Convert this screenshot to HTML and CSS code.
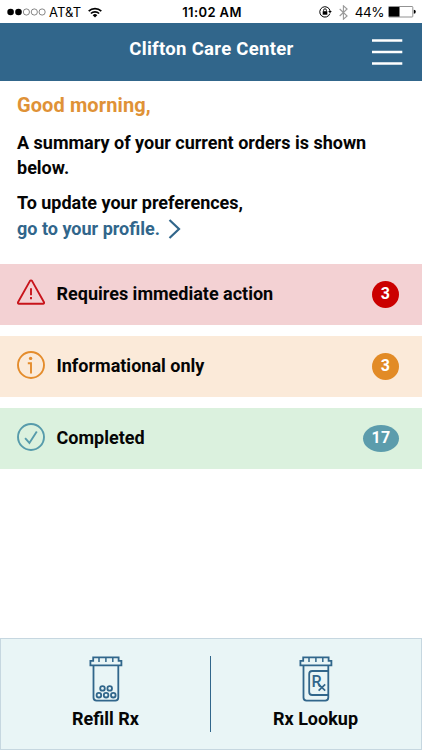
FILE: index.html
```html
<!DOCTYPE html>
<html lang="en">
<head>
    <meta charset="UTF-8">
    <meta name="viewport" content="width=device-width, initial-scale=1">
    <title>Clifton Care Center</title>
    <link rel="stylesheet" href="styles.css">
</head>
<body>

<div class="status-bar">
    <div class="status-left">
        <svg class="signal" width="39" height="8" viewBox="0 0 39 8">
            <circle cx="3.6" cy="4" r="3.3" fill="#000"/>
            <circle cx="11.5" cy="4" r="3.3" fill="#000"/>
            <g fill="none" stroke="#555" stroke-width="0.7">
                <circle cx="19.4" cy="4" r="3.1"/>
                <circle cx="27.3" cy="4" r="3.1"/>
                <circle cx="35.1" cy="4" r="3.1"/>
            </g>
        </svg>
        <span class="carrier">AT&amp;T</span>
        <svg class="wifi" width="14" height="11" viewBox="0 0 14 11">
            <g fill="none" stroke="#000" stroke-width="1.7">
                <path d="M0.7 4.1a9 9 0 0 1 12.6 0"/>
                <path d="M2.9 6.5a5.8 5.8 0 0 1 8.2 0"/>
            </g>
            <path d="M7 10.6L4.7 8.2a3.3 3.3 0 0 1 4.6 0z"/>
        </svg>
    </div>
    <div class="status-time">11:02 AM</div>
    <div class="status-right">
        <svg class="lock" width="13" height="12" viewBox="0 0 13 12">
            <path d="M10.9 7.6a5.2 5.2 0 1 1 .2-2.6" fill="none" stroke="#000" stroke-width="1"/>
            <path d="M9.2 5h3.6L11 7.3z"/>
            <rect x="3.7" y="5.2" width="4.6" height="3.5"/>
            <path d="M4.6 5.4V4.2a1.4 1.4 0 0 1 2.8 0v1.2" fill="none" stroke="#000" stroke-width="0.9"/>
        </svg>
        <svg class="bluetooth" width="9" height="15" viewBox="0 0 9 15">
            <path d="M0.7 4l7.4 7-3.7 3.2V0.8L8.1 4 0.7 11" fill="none" stroke="#999" stroke-width="1.1"/>
        </svg>
        <span class="percent">44%</span>
        <svg class="battery" width="28" height="12" viewBox="0 0 28 12">
            <rect x="0.5" y="0.5" width="24.3" height="10.5" rx="0.7" fill="#fff" stroke="#777" stroke-width="0.8"/>
            <rect x="1" y="1" width="10.5" height="9.6"/>
            <path d="M25.8 3.8a2 2 0 0 1 0 4z"/>
        </svg>
    </div>
</div>

<div class="header">
    <h1>Clifton Care Center</h1>
    <svg class="menu" width="31" height="28" viewBox="0 0 31 28" fill="none" stroke="#fff" stroke-width="2.5">
        <path d="M0 2.6h30.3M0 14h30.3M0 25.4h30.3"/>
    </svg>
</div>

<div class="intro">
    <h2>Good morning,</h2>
    <p>A summary of your current orders is shown below.</p>
    <p class="update">To update your preferences,<br>
        <a href="#">go to your profile.
            <svg class="chevron" width="13" height="20" viewBox="0 0 13 20">
                <path d="M1.5 1l9.5 9-9.5 9" fill="none" stroke="#31668b" stroke-width="2.2"/>
            </svg>
        </a>
    </p>
</div>

<div class="orders">
    <div class="order action">
        <svg class="order-icon" width="28" height="28" viewBox="0 0 28 28" fill="none" stroke="#c8141b" stroke-width="1.9">
            <path d="M13 1.9a1.2 1.2 0 0 1 2 0l12 21.3a1 1 0 0 1-.9 1.5H1.9a1 1 0 0 1-.9-1.5z"/>
            <path d="M14 9.3v6.9M14 18.1v2.1"/>
        </svg>
        <span class="label">Requires immediate action</span>
        <span class="badge">3</span>
    </div>
    <div class="order info">
        <svg class="order-icon" width="28" height="28" viewBox="0 0 28 28" fill="none" stroke="#e48c2c" stroke-width="1.9">
            <circle cx="14" cy="14" r="13"/>
            <circle cx="13.6" cy="7.4" r="1.7" fill="#e48c2c" stroke="none"/>
            <path d="M10.8 12.3H14v10.3"/>
        </svg>
        <span class="label">Informational only</span>
        <span class="badge">3</span>
    </div>
    <div class="order completed">
        <svg class="order-icon" width="28" height="28" viewBox="0 0 28 28" fill="none" stroke="#579bab" stroke-width="1.9">
            <circle cx="14" cy="14" r="13"/>
            <path d="M8.1 15.2l4.3 4.7 7.4-11.5"/>
        </svg>
        <span class="label">Completed</span>
        <span class="badge">17</span>
    </div>
</div>

<div class="footer">
    <a class="tab" href="#">
        <svg width="34" height="46" viewBox="0 0 34 46" fill="none" stroke="#31668b" stroke-width="1.8">
            <path d="M4.2 4.8V1.4h25.4v3.4H32.4v4.6H1.4V4.8z"/>
            <path d="M10 1.4v4.6M16.9 1.4v4.6M23.8 1.4v4.6" stroke-width="1.5"/>
            <path d="M4.5 9.4v32.2a3 3 0 0 0 3 3h18.8a3 3 0 0 0 3-3V9.4"/>
            <circle cx="13.5" cy="32.4" r="2.3"/>
            <circle cx="20.7" cy="32.4" r="2.3"/>
            <circle cx="9.9" cy="39.2" r="2.3"/>
            <circle cx="17.1" cy="39.2" r="2.3"/>
            <circle cx="24.3" cy="39.2" r="2.3"/>
        </svg>
        <span>Refill Rx</span>
    </a>
    <div class="divider"></div>
    <a class="tab" href="#">
        <svg width="34" height="46" viewBox="0 0 34 46" fill="none" stroke="#31668b" stroke-width="1.8">
            <path d="M4.2 4.8V1.4h25.4v3.4H32.4v4.6H1.4V4.8z"/>
            <path d="M10 1.4v4.6M16.9 1.4v4.6M23.8 1.4v4.6" stroke-width="1.5"/>
            <path d="M4.5 9.4v32.2a3 3 0 0 0 3 3h18.8a3 3 0 0 0 3-3V9.4"/>
            <path d="M29.3 15H13.2a3 3 0 0 0-3 3v18a3 3 0 0 0 3 3h16.1"/>
            <text class="rx" x="12.6" y="31.2">R</text>
            <path d="M19.6 28.4l6.6 6.2M26.2 28.4l-6.6 6.2" stroke-width="1.7"/>
        </svg>
        <span>Rx Lookup</span>
    </a>
</div>

</body>
</html>
```
FILE: styles.css
```css
* {
    box-sizing: border-box;
}
body {
    font-family: Roboto, Arial, sans-serif;
    font-size: 18px;
    font-weight: bold;
    color: #050505;
    background-color: #fff;
    margin: 0;
    height: 100vh;
    display: flex;
    flex-direction: column;
}
a {
    text-decoration: none;
}
.status-bar {
    display: grid;
    grid-template-columns: 1fr auto 1fr;
    align-items: center;
    height: 23px;
    padding: 1px 6px 0 7px;
    font-family: Inter, Arial, sans-serif;
    font-size: 13px;
    font-weight: normal;
    color: #000;
}
.status-left, .status-right {
    display: flex;
    align-items: center;
}
.status-right {
    justify-content: flex-end;
}
.carrier {
    margin: 0 7px 0 3px;
    letter-spacing: 0.1px;
}
.status-time {
    padding-left: 1px;
    font-weight: 600;
    letter-spacing: 0.4px;
}
.bluetooth {
    margin: 0 7px 0 7px;
}
.percent {
    font-size: 13.5px;
    letter-spacing: -0.5px;
}
.battery {
    margin-left: 4px;
}
.header {
    display: grid;
    grid-template-columns: 1fr auto 1fr;
    height: 58px;
    padding: 0 19px 0 20px;
    background-color: #31668b;
    color: #fff;
}
.header h1 {
    grid-column: 2;
    margin: 15px 0 0;
    font-size: 18.5px;
    line-height: 22px;
    letter-spacing: 0.3px;
}
.menu {
    justify-self: end;
    margin-top: 15px;
}
.intro {
    height: 183px;
    padding: 12px 17px 0;
}
.intro h2 {
    margin: 0;
    font-size: 20px;
    line-height: 24px;
    letter-spacing: 0.1px;
    color: #df9237;
}
.intro p {
    margin: 13px 0 0;
    line-height: 25px;
}
.intro .update {
    margin-top: 10px;
    line-height: 26px;
}
.intro a {
    display: flex;
    align-items: center;
    gap: 8px;
    color: #31668b;
}
.orders {
    display: flex;
    flex-direction: column;
    gap: 11px;
}
.order {
    display: flex;
    align-items: center;
    height: 61px;
    padding: 0 23px 0 17px;
}
.order-icon {
    margin-top: -4px;
}
.label {
    flex: 1;
    margin: -3px 0 0 11.5px;
}
.badge {
    min-width: 27px;
    height: 27px;
    padding: 0 8.5px;
    border-radius: 50%;
    font-size: 16px;
    line-height: 26px;
    letter-spacing: 0.3px;
    text-align: center;
    color: #fff;
}
.action {
    background-color: #f3d1d3;
}
.action .badge {
    background-color: #cb0000;
}
.info {
    background-color: #fbead9;
}
.info .badge {
    background-color: #e28b26;
}
.completed {
    background-color: #dbf1de;
}
.completed .badge {
    background-color: #5c9cac;
}
.footer {
    display: flex;
    height: 112px;
    margin-top: auto;
    padding-right: 1px;
    border: 1px solid #c6d7e0;
    background-color: #e9f5f6;
}
.tab {
    flex: 1;
    display: flex;
    flex-direction: column;
    align-items: center;
    padding-top: 17px;
    color: #050505;
}
.tab span {
    margin-top: 6px;
    line-height: 22px;
}
.divider {
    width: 1px;
    height: 76px;
    margin-top: 17px;
    background-color: #31668b;
}
.rx {
    font-size: 16px;
    font-weight: 500;
    fill: #31668b;
    stroke: none;
}
```
